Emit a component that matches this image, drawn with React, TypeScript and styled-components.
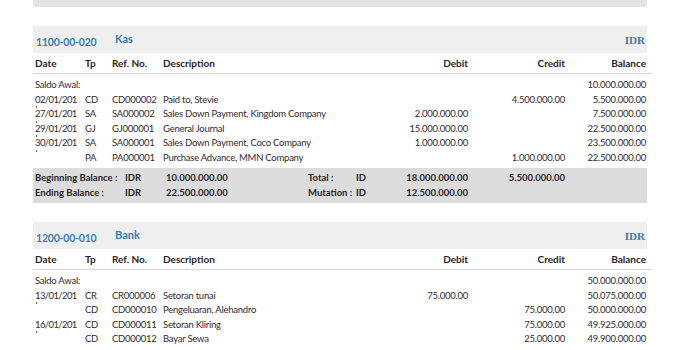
import styled, { createGlobalStyle } from "styled-components";

const GlobalStyle = createGlobalStyle`
	body {
		margin: 0;
		background: #ffffff;
		font-family: Lato, "Open Sans", sans-serif;
		color: #35292f;
	}
`;

const Page = styled.div`
	width: 680px;
	height: 350px;
	overflow: hidden;
	padding-left: 33px;
	box-sizing: border-box;
`;

const TopBar = styled.div`
	width: 614px;
	height: 7px;
	background: #e3e3e3;
`;

const Section = styled.div`
	width: 614px;
	margin-top: 19px;
`;

const AccountHeader = styled.div`
	height: 27px;
	background: #efefef;
	display: flex;
	align-items: center;
	padding: 0 2px 0 3px;
	color: #3b7db6;
	font-weight: 700;
`;

const AccountCode = styled.span`
	width: 79px;
	font-size: 10.5px;
	letter-spacing: -0.2px;
	padding-top: 4px;
`;

const AccountName = styled.span`
	flex: 1;
	font-size: 11px;
	padding-bottom: 2px;
`;

const Currency = styled.span`
	font-size: 11px;
	font-family: "Liberation Serif", serif;
`;

const columns = "50px 27px 51px 217px 88px 97px 81px";

const HeadRow = styled.div`
	display: grid;
	grid-template-columns: ${columns};
	height: 20px;
	align-items: center;
	padding-left: 2px;
	margin-right: -5px;
	border-bottom: 1px solid #d6d6d6;
	font-size: 10px;
	font-weight: 700;
	color: #2a2327;
`;

const Body = styled.div`
	padding-top: 4px;
	padding-bottom: 3px;
`;

const Row = styled.div`
	display: grid;
	grid-template-columns: ${columns};
	height: 14.5px;
	line-height: 14.5px;
	padding-left: 2px;
	font-size: 9.5px;
	letter-spacing: -0.25px;
	white-space: nowrap;
`;

const Cell = styled.span<{ $right?: boolean }>`
	text-align: ${(p) => (p.$right ? "right" : "left")};
`;

const DateCell = styled.span`
	letter-spacing: -0.6px;

	&::after {
		content: "";
		display: block;
		width: 1px;
		height: 2px;
		margin: -1px 0 0 1px;
		background: #6a5a62;
	}
`;

const Summary = styled.div`
	background: #dcdcdc;
	padding: 3px 0 3px 2px;
`;

const SumRow = styled.div`
	display: grid;
	grid-template-columns: 90px 41px 142px 48px 50px 62px 97px;
	height: 14.5px;
	line-height: 14.5px;
	font-size: 9.5px;
	font-weight: 700;
	white-space: nowrap;
	color: #2a2327;
`;

type Entry = [string, string, string, string, string, string, string];

const kas: Entry[] = [
	["Saldo Awal:", "", "", "", "", "", "10.000.000.00"],
	["02/01/201", "CD", "CD000002", "Paid to, Stevie", "", "4.500.000.00", "5.500.000.00"],
	["27/01/201", "SA", "SA000002", "Sales Down Payment, Kingdom Company", "2.000.000.00", "", "7.500.000.00"],
	["29/01/201", "GJ", "GJ000001", "General Journal", "15.000.000.00", "", "22.500.000.00"],
	["30/01/201", "SA", "SA000001", "Sales Down Payment, Coco Company", "1.000.000.00", "", "23.500.000.00"],
	["", "PA", "PA000001", "Purchase Advance, MMN Company", "", "1.000.000.00", "22.500.000.00"],
];

const bank: Entry[] = [
	["Saldo Awal:", "", "", "", "", "", "50.000.000.00"],
	["13/01/201", "CR", "CR000006", "Setoran tunai", "75.000.00", "", "50.075.000.00"],
	["", "CD", "CD000010", "Pengeluaran, Alehandro", "", "75.000.00", "50.000.000.00"],
	["16/01/201", "CD", "CD000011", "Setoran Kliring", "", "75.000.00", "49.925.000.00"],
	["", "CD", "CD000012", "Bayar Sewa", "", "25.000.00", "49.900.000.00"],
];

const Head = () => (
	<HeadRow>
		<Cell>Date</Cell>
		<Cell>Tp</Cell>
		<Cell>Ref. No.</Cell>
		<Cell>Description</Cell>
		<Cell $right>Debit</Cell>
		<Cell $right>Credit</Cell>
		<Cell $right>Balance</Cell>
	</HeadRow>
);

const Lines = ({ entries }: { entries: Entry[] }) => (
	<Body>
		{entries.map((e, i) => (
			<Row key={i}>
				{e.map((v, j) =>
					j === 0 && /^\d/.test(v) ? (
						<DateCell key={j}>{v}</DateCell>
					) : (
						<Cell key={j} $right={j >= 4}>
							{v}
						</Cell>
					)
				)}
			</Row>
		))}
	</Body>
);

const App = () => {
	return (
		<Page>
			<GlobalStyle />
			<TopBar />
			<Section>
				<AccountHeader>
					<AccountCode>1100-00-020</AccountCode>
					<AccountName>Kas</AccountName>
					<Currency>IDR</Currency>
				</AccountHeader>
				<Head />
				<Lines entries={kas} />
				<Summary>
					<SumRow>
						<span>Beginning Balance :</span>
						<span>IDR</span>
						<span>10.000.000.00</span>
						<span>Total :</span>
						<span>ID</span>
						<Cell $right>18.000.000.00</Cell>
						<Cell $right>5.500.000.00</Cell>
					</SumRow>
					<SumRow>
						<span>Ending Balance :</span>
						<span>IDR</span>
						<span>22.500.000.00</span>
						<span>Mutation :</span>
						<span>ID</span>
						<Cell $right>12.500.000.00</Cell>
						<span />
					</SumRow>
				</Summary>
			</Section>
			<Section>
				<AccountHeader>
					<AccountCode>1200-00-010</AccountCode>
					<AccountName>Bank</AccountName>
					<Currency>IDR</Currency>
				</AccountHeader>
				<Head />
				<Lines entries={bank} />
			</Section>
		</Page>
	);
};

export default App;
